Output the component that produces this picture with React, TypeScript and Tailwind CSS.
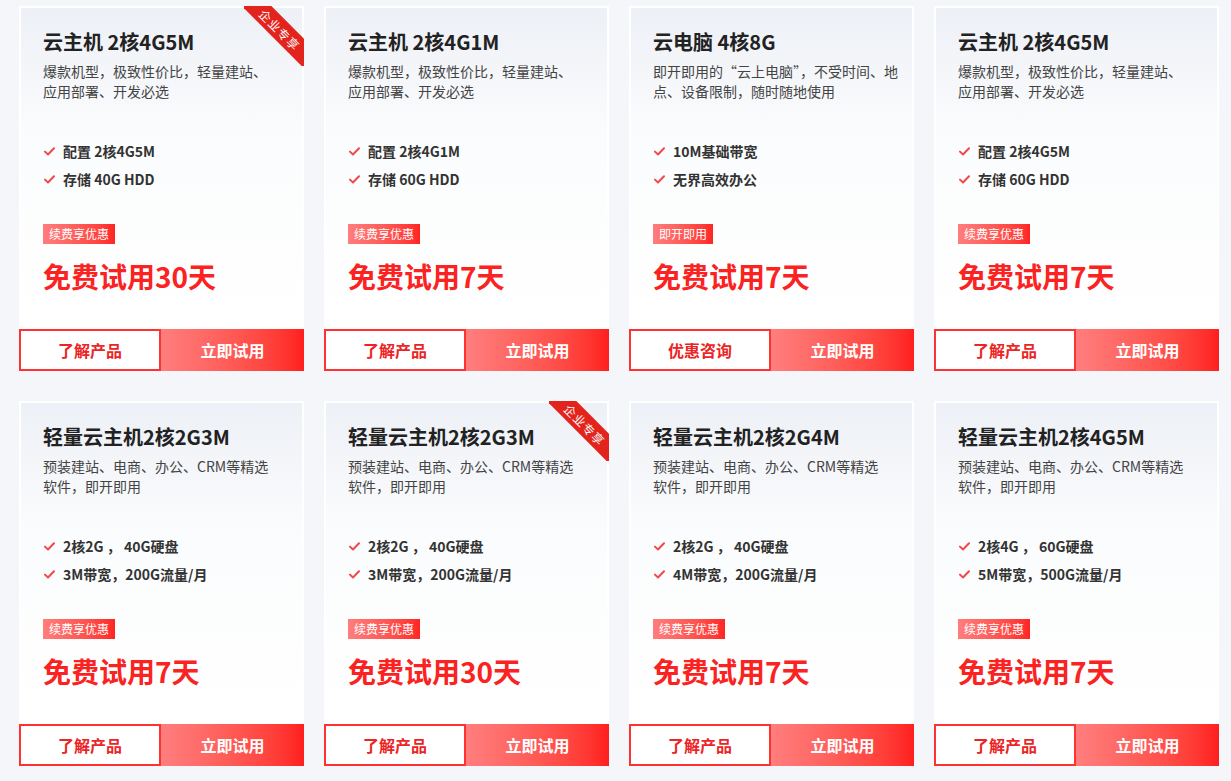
import React from "react";

type Plan = {
  title: string;
  desc: string[];
  features: string[];
  badge: string;
  trial: string;
  leftBtn: string;
  ribbon?: boolean;
};

const descHost = ["爆款机型，极致性价比，轻量建站、", "应用部署、开发必选"];
const descLight = ["预装建站、电商、办公、CRM等精选", "软件，即开即用"];

const plans: Plan[] = [
  { title: "云主机 2核4G5M", desc: descHost, features: ["配置 2核4G5M", "存储 40G HDD"], badge: "续费享优惠", trial: "免费试用30天", leftBtn: "了解产品", ribbon: true },
  { title: "云主机 2核4G1M", desc: descHost, features: ["配置 2核4G1M", "存储 60G HDD"], badge: "续费享优惠", trial: "免费试用7天", leftBtn: "了解产品" },
  { title: "云电脑 4核8G", desc: ["即开即用的“云上电脑”，不受时间、地", "点、设备限制，随时随地使用"], features: ["10M基础带宽", "无界高效办公"], badge: "即开即用", trial: "免费试用7天", leftBtn: "优惠咨询" },
  { title: "云主机 2核4G5M", desc: descHost, features: ["配置 2核4G5M", "存储 60G HDD"], badge: "续费享优惠", trial: "免费试用7天", leftBtn: "了解产品" },
  { title: "轻量云主机2核2G3M", desc: descLight, features: ["2核2G ， 40G硬盘", "3M带宽，200G流量/月"], badge: "续费享优惠", trial: "免费试用7天", leftBtn: "了解产品" },
  { title: "轻量云主机2核2G3M", desc: descLight, features: ["2核2G ， 40G硬盘", "3M带宽，200G流量/月"], badge: "续费享优惠", trial: "免费试用30天", leftBtn: "了解产品", ribbon: true },
  { title: "轻量云主机2核2G4M", desc: descLight, features: ["2核2G ， 40G硬盘", "4M带宽，200G流量/月"], badge: "续费享优惠", trial: "免费试用7天", leftBtn: "了解产品" },
  { title: "轻量云主机2核4G5M", desc: descLight, features: ["2核4G ， 60G硬盘", "5M带宽，500G流量/月"], badge: "续费享优惠", trial: "免费试用7天", leftBtn: "了解产品" },
];

function Check() {
  return (
    <svg width="11" height="9" viewBox="0 0 11 9" fill="none" className="shrink-0">
      <path d="M1 4.6 L4 7.5 L10 1.2" stroke="#f04a4a" strokeWidth="2" strokeLinecap="round" strokeLinejoin="round" />
    </svg>
  );
}

function PlanCard({ plan }: { plan: Plan }) {
  return (
    <div className="relative flex flex-col w-[285px] h-[365px] bg-white">
      <div className="flex-1 border-2 border-b-0 border-white bg-gradient-to-b from-[#edf0f6] via-[#fbfcfd] via-40% to-white px-[22px] pt-[20px]">
        <h3 className="text-[20px] leading-[28px] font-bold text-[#222]">{plan.title}</h3>
        <p className="mt-[5px] text-[14px] leading-[20px] text-[#444]">
          {plan.desc.map((line, i) => (
            <span key={i} className="block whitespace-nowrap">{line}</span>
          ))}
        </p>
        <ul className="mt-[36px]">
          {plan.features.map((f, i) => (
            <li key={i} className="flex items-center gap-[8px] h-[28px] pl-px text-[14px] font-bold text-[#333]">
              <Check />
              <span>{f}</span>
            </li>
          ))}
        </ul>
        <div className="mt-[31px] flex">
          <span className="h-[20px] px-[6px] text-[12px] leading-[20px] text-white bg-gradient-to-r from-[#ff7d7d] to-[#ff2424]">
            {plan.badge}
          </span>
        </div>
        <div className="mt-[12px] text-[28px] leading-[40px] font-bold text-[#fb2222]">{plan.trial}</div>
      </div>
      <div className="flex h-[42px]">
        <button className="w-[142px] h-full bg-white border-2 border-[#ff3232] text-[16px] font-bold text-[#ec2424] cursor-pointer">
          {plan.leftBtn}
        </button>
        <button className="flex-1 h-full bg-gradient-to-r from-[#ff7e7e] to-[#ff1e1e] text-[16px] font-bold text-white cursor-pointer">
          立即试用
        </button>
      </div>
      {plan.ribbon && (
        <div className="absolute top-0 right-0 w-[60px] h-[60px] overflow-hidden pointer-events-none">
          <div className="absolute left-[-14px] top-[13px] w-[100px] h-[21px] rotate-45 bg-[#e3241d] text-white text-[12px] leading-[21px] text-center tracking-[1px]">
            企业专享
          </div>
        </div>
      )}
    </div>
  );
}

export default function App() {
  return (
    <div
      className="min-h-[781px] w-full bg-[#f5f6fa] pl-[19px] pt-[6px]"
      style={{ fontFamily: '"Noto Sans CJK SC", "Noto Sans", sans-serif' }}
    >
      <div className="grid grid-cols-[repeat(4,285px)] gap-x-[20px] gap-y-[30px]">
        {plans.map((p, i) => (
          <PlanCard key={i} plan={p} />
        ))}
      </div>
    </div>
  );
}
